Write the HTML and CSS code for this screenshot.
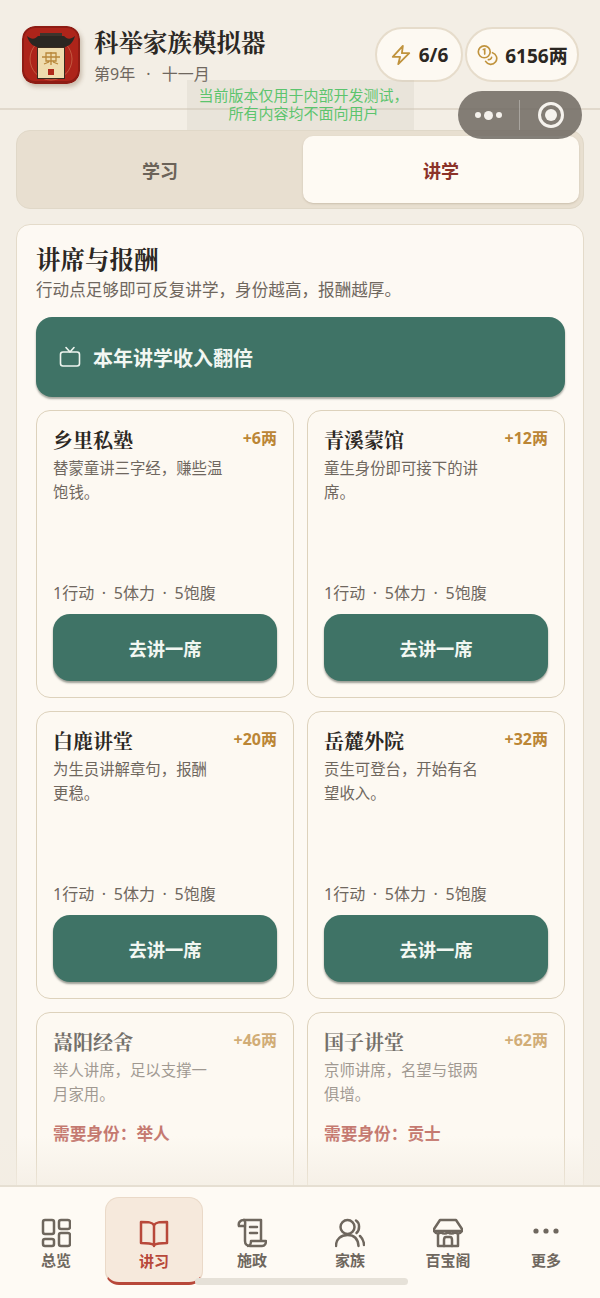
FILE: index.html
```html
<!DOCTYPE html>
<html lang="zh-CN">
<head>
    <meta charset="UTF-8">
    <meta name="viewport" content="width=device-width, initial-scale=1.0">
    <title>科举家族模拟器</title>
    <link rel="stylesheet" href="styles.css">
</head>
<body>
    <div class="app">
        <header class="top-bar">
            <div class="logo">
                <svg viewBox="0 0 58 58" width="58" height="58">
                    <rect x="0" y="0" width="58" height="58" rx="13" fill="#8e1c14"/>
                    <rect x="2" y="2" width="54" height="53" rx="11" fill="#ad241a"/>
                    <circle cx="29" cy="33" r="21" fill="none" stroke="#c9674a" stroke-width="0.8"/>
                    <rect x="15" y="20" width="28" height="33" fill="#3a2a20"/>
                    <rect x="16" y="22" width="26" height="30" fill="#efdcae"/>
                    <path d="M5 10 C10 14 13 13 16 10 H42 C45 13 48 14 53 10 C51 17 47 20 43 21 H15 C11 20 7 17 5 10Z" fill="#2b2722"/>
                    <rect x="18" y="7" width="22" height="3" fill="#3d342c"/>
                    <path d="M20 31 H38 M29 26 V39 M24 27 H34 V35 H24 Z M22 38 L27 36 M36 38 L31 36" stroke="#b8873a" stroke-width="1.3" fill="none"/>
                    <rect x="26" y="43" width="6" height="6" fill="#b02a1c"/>
                </svg>
            </div>
            <div class="title-block">
                <h1 class="game-title">科举家族模拟器</h1>
                <p class="game-date">第9年 <span class="dot">·</span> 十一月</p>
            </div>
            <div class="stat-pills">
                <div class="pill pill-action">
                    <svg viewBox="0 0 24 24" width="22" height="22" fill="none" stroke="#c0933d" stroke-width="2" stroke-linejoin="round">
                        <path d="M14 2 L3 14 H11 L9 22 L21 10 H13 Z"/>
                    </svg>
                    <span>6/6</span>
                </div>
                <div class="pill pill-money">
                    <svg viewBox="0 0 24 24" width="22" height="22" fill="none" stroke="#c0933d" stroke-width="1.8" stroke-linecap="round">
                        <circle cx="9" cy="8.5" r="6.5"/>
                        <path d="M8 6 L9.5 5.5 V11"/>
                        <path d="M18 9.5 A6.5 6.5 0 1 1 10.5 19"/>
                        <path d="M13.5 17 A3 3 0 0 0 17 14.5"/>
                    </svg>
                    <span>6156两</span>
                </div>
            </div>
        </header>

        <div class="dev-notice">当前版本仅用于内部开发测试，<br>所有内容均不面向用户</div>

        <div class="mp-capsule">
            <div class="capsule-dots"><i></i><b></b><i></i></div>
            <div class="capsule-line"></div>
            <div class="capsule-target"></div>
        </div>

        <main class="content">
            <div class="tabs">
                <div class="tab">学习</div>
                <div class="tab tab-active">讲学</div>
            </div>

            <section class="panel">
                <h2 class="panel-title">讲席与报酬</h2>
                <p class="panel-desc">行动点足够即可反复讲学，身份越高，报酬越厚。</p>

                <div class="ad-banner">
                    <svg viewBox="0 0 24 24" width="24" height="24" fill="none" stroke="#eef5ef" stroke-width="1.6" stroke-linecap="round" stroke-linejoin="round">
                        <rect x="2.5" y="7" width="19" height="14" rx="2.5"/>
                        <path d="M8 2.5 L12 7 L16 2.5"/>
                    </svg>
                    <span>本年讲学收入翻倍</span>
                </div>

                <div class="venue-grid">
                    <article class="venue">
                        <div class="venue-head"><h3>乡里私塾</h3><span class="reward">+6两</span></div>
                        <p class="venue-desc">替蒙童讲三字经，赚些温<br>饱钱。</p>
                        <p class="venue-cost">1行动 <span class="dot">·</span> 5体力 <span class="dot">·</span> 5饱腹</p>
                        <button class="venue-btn">去讲一席</button>
                    </article>
                    <article class="venue">
                        <div class="venue-head"><h3>青溪蒙馆</h3><span class="reward">+12两</span></div>
                        <p class="venue-desc">童生身份即可接下的讲<br>席。</p>
                        <p class="venue-cost">1行动 <span class="dot">·</span> 5体力 <span class="dot">·</span> 5饱腹</p>
                        <button class="venue-btn">去讲一席</button>
                    </article>
                    <article class="venue">
                        <div class="venue-head"><h3>白鹿讲堂</h3><span class="reward">+20两</span></div>
                        <p class="venue-desc">为生员讲解章句，报酬<br>更稳。</p>
                        <p class="venue-cost">1行动 <span class="dot">·</span> 5体力 <span class="dot">·</span> 5饱腹</p>
                        <button class="venue-btn">去讲一席</button>
                    </article>
                    <article class="venue">
                        <div class="venue-head"><h3>岳麓外院</h3><span class="reward">+32两</span></div>
                        <p class="venue-desc">贡生可登台，开始有名<br>望收入。</p>
                        <p class="venue-cost">1行动 <span class="dot">·</span> 5体力 <span class="dot">·</span> 5饱腹</p>
                        <button class="venue-btn">去讲一席</button>
                    </article>
                    <article class="venue venue-locked">
                        <div class="venue-head"><h3>嵩阳经舍</h3><span class="reward">+46两</span></div>
                        <p class="venue-desc">举人讲席，足以支撑一<br>月家用。</p>
                        <p class="venue-need">需要身份：举人</p>
                    </article>
                    <article class="venue venue-locked">
                        <div class="venue-head"><h3>国子讲堂</h3><span class="reward">+62两</span></div>
                        <p class="venue-desc">京师讲席，名望与银两<br>俱增。</p>
                        <p class="venue-need">需要身份：贡士</p>
                    </article>
                </div>
            </section>
        </main>

        <div class="nav-fade"></div>

        <nav class="bottom-nav">
            <div class="nav-item">
                <svg viewBox="0 0 30 30" width="30" height="30" fill="none" stroke="#6f675e" stroke-width="2.5" stroke-linejoin="round">
                    <rect x="2" y="2" width="11" height="14" rx="2"/>
                    <rect x="18" y="2" width="11" height="9" rx="2"/>
                    <rect x="2" y="21" width="11" height="7" rx="2"/>
                    <rect x="18" y="15" width="11" height="13" rx="2"/>
                </svg>
                <span>总览</span>
            </div>
            <div class="nav-item nav-active">
                <svg viewBox="0 0 30 30" width="30" height="30" fill="none" stroke="#b8483a" stroke-width="2.5" stroke-linejoin="round" stroke-linecap="round">
                    <path d="M15 6 C13 3 9 3 2 3 V24 C8 24 12 24 15 26 C18 24 22 24 28 24 V3 C21 3 17 3 15 6 Z"/>
                    <path d="M15 6 V27"/>
                </svg>
                <span>讲习</span>
            </div>
            <div class="nav-item">
                <svg viewBox="0 0 30 30" width="30" height="30" fill="none" stroke="#6f675e" stroke-width="2.5" stroke-linejoin="round" stroke-linecap="round">
                    <path d="M7 2 H24 V22"/>
                    <path d="M7 2 C3 2 1 5 2 8 H8 V23 C8 26 10 28 13 28 H25 C28 28 29 25 29 23 H14 C14 25 13 28 11 28"/>
                    <path d="M7 2 C9 3 8 6 8 8"/>
                    <path d="M13 9 H20 M13 15 H20"/>
                </svg>
                <span>施政</span>
            </div>
            <div class="nav-item">
                <svg viewBox="0 0 30 30" width="30" height="30" fill="none" stroke="#6f675e" stroke-width="2.5" stroke-linecap="round">
                    <circle cx="12.5" cy="9" r="7"/>
                    <path d="M1 28 C1 21 6 17 12.5 17 C19 17 23 21 23.5 28"/>
                    <path d="M21 2.5 C25 5 25 12 21.5 15"/>
                    <path d="M25 18 C28 21 29 24 29 27"/>
                </svg>
                <span>家族</span>
            </div>
            <div class="nav-item">
                <svg viewBox="0 0 30 30" width="30" height="30" fill="none" stroke="#6f675e" stroke-width="2.5" stroke-linejoin="round" stroke-linecap="round">
                    <path d="M7 2 H23 L29 11 V13 H1 V11 Z"/>
                    <path d="M1 13 C3 16 6 16 8 14 C10 16 13 16 15 14 C17 16 20 16 22 14 C24 16 27 16 29 13"/>
                    <path d="M5 16 V28 H25 V16"/>
                    <path d="M11 28 V22 C11 20 12 19 13 19 H17 C18 19 19 20 19 22 V28"/>
                </svg>
                <span>百宝阁</span>
            </div>
            <div class="nav-item">
                <svg viewBox="0 0 30 30" width="30" height="30" fill="#6f675e">
                    <circle cx="5" cy="13" r="2.6"/>
                    <circle cx="15" cy="13" r="2.6"/>
                    <circle cx="25" cy="13" r="2.6"/>
                </svg>
                <span>更多</span>
            </div>
        </nav>
        <div class="home-bar"></div>
    </div>
</body>
</html>
```

FILE: styles.css
```css
* {
    box-sizing: border-box;
}

body {
    margin: 0;
    background-color: #f3eee5;
    color: #2c2722;
    font-family: "Noto Sans", "Noto Sans CJK SC", sans-serif;
}

h1, h2, h3, p {
    margin: 0;
}

.app {
    position: relative;
    width: 600px;
    height: 1298px;
    overflow: hidden;
}

/* Top bar */
.top-bar {
    display: flex;
    align-items: flex-start;
    height: 110px;
    padding: 26px 21px 0 22px;
    border-bottom: 2px solid #e1d9cc;
}

.logo {
    width: 58px;
    height: 58px;
    border-radius: 13px;
    overflow: hidden;
    box-shadow: 2px 3px 4px rgba(110, 80, 50, 0.3);
}

.title-block {
    margin-top: -1px;
    margin-left: 14px;
}

.game-title {
    font-family: "Noto Serif CJK SC", "Noto Sans CJK SC", serif;
    font-size: 24.5px;
    font-weight: 700;
    line-height: 34px;
    color: #2b2723;
}

.game-date {
    margin-top: 3px;
    font-size: 16px;
    line-height: 24px;
    color: #6f675e;
}

.game-date .dot {
    margin: 0 7px;
}

.stat-pills {
    display: flex;
    gap: 2px;
    margin-left: auto;
    margin-top: 1px;
}

.pill {
    display: flex;
    align-items: center;
    justify-content: center;
    gap: 7px;
    height: 55px;
    border: 2px solid #e6dccb;
    border-radius: 28px;
    background-color: #fdf9f2;
    font-size: 19px;
    font-weight: 700;
}

.pill-action {
    width: 88px;
}

.pill-money {
    width: 114px;
}

/* Overlays from the host app */
.dev-notice {
    position: absolute;
    left: 187px;
    top: 80px;
    width: 227px;
    height: 50px;
    padding: 6px 0 0 6px;
    background-color: rgba(200, 195, 180, 0.22);
    color: #5cc46e;
    font-size: 15px;
    line-height: 18px;
    text-align: center;
}

.mp-capsule {
    position: absolute;
    left: 458px;
    top: 91px;
    z-index: 3;
    display: flex;
    align-items: center;
    width: 124px;
    height: 48px;
    border-radius: 24px;
    background-color: rgba(110, 105, 98, 0.85);
}

.capsule-dots {
    display: flex;
    align-items: center;
    justify-content: center;
    gap: 3px;
    width: 61px;
}

.capsule-dots i {
    width: 6px;
    height: 6px;
    border-radius: 50%;
    background-color: #f4f1ec;
}

.capsule-dots b {
    width: 9px;
    height: 9px;
    border-radius: 50%;
    background-color: #f4f1ec;
}

.capsule-line {
    width: 1px;
    height: 30px;
    background-color: rgba(255, 255, 255, 0.3);
}

.capsule-target {
    position: relative;
    width: 26px;
    height: 26px;
    margin-left: 18px;
    border: 3px solid #f6f3ee;
    border-radius: 50%;
}

.capsule-target::after {
    content: "";
    position: absolute;
    left: 4px;
    top: 4px;
    width: 12px;
    height: 12px;
    border-radius: 50%;
    background-color: #f6f3ee;
}

/* Tabs */
.content {
    padding: 20px 16px 0;
}

.tabs {
    display: flex;
    height: 79px;
    padding: 5px 4px 5px 5px;
    gap: 5px;
    border: 1px solid #e0d8c8;
    border-radius: 14px;
    background-color: #e8dfd0;
}

.tab {
    flex: 1;
    display: flex;
    align-items: center;
    justify-content: center;
    font-size: 18px;
    font-weight: 700;
    color: #6b6359;
}

.tab-active {
    border-radius: 10px;
    background-color: #fefaf3;
    color: #8c3228;
    box-shadow: 0 1px 2px rgba(120, 100, 70, 0.25);
}

/* Panel */
.panel {
    margin-top: 15px;
    padding: 17px 18px 40px 19px;
    border: 1px solid #e4dbca;
    border-radius: 14px;
    background-color: #fdf9f3;
}

.panel-title {
    margin-bottom: 2px;
    font-family: "Noto Serif CJK SC", "Noto Sans CJK SC", serif;
    font-size: 24.5px;
    font-weight: 700;
    line-height: 34px;
    color: #2b2723;
}

.panel-desc {
    font-size: 16.6px;
    line-height: 24px;
    color: #6f675e;
}

.ad-banner {
    display: flex;
    align-items: center;
    gap: 11px;
    height: 80px;
    margin-top: 15px;
    padding-left: 22px;
    border-radius: 16px;
    background-color: #3f7366;
    box-shadow: 0 2px 2px rgba(60, 70, 60, 0.45);
    color: #f2f7f2;
    font-size: 20px;
    font-weight: 700;
}

.venue-grid {
    display: grid;
    grid-template-columns: 258px 258px;
    grid-auto-rows: 288px;
    gap: 13px;
    margin-top: 13px;
}

.venue {
    display: flex;
    flex-direction: column;
    padding: 14px 16px 16px;
    border: 1px solid #ddd2bc;
    border-radius: 14px;
    background-color: #fdf9f2;
}

.venue-head {
    display: flex;
    align-items: flex-start;
    justify-content: space-between;
}

.venue-head h3 {
    font-family: "Noto Serif CJK SC", "Noto Sans CJK SC", serif;
    font-size: 20px;
    font-weight: 700;
    line-height: 30px;
    color: #2b2723;
}

.reward {
    font-size: 16px;
    font-weight: 700;
    line-height: 26px;
    color: #bb8636;
}

.venue-desc {
    margin-top: 2px;
    font-size: 15.4px;
    line-height: 24px;
    color: #6f675e;
}

.venue-cost {
    margin-top: auto;
    font-size: 16px;
    line-height: 22px;
    color: #6f675e;
}

.venue-cost .dot {
    margin: 0 3.5px;
}

.venue-btn {
    height: 67px;
    margin-top: 10px;
    border: none;
    border-radius: 17px;
    background-color: #3f7366;
    box-shadow: 0 2px 2px rgba(60, 70, 60, 0.5);
    color: #f2f7f2;
    font-family: inherit;
    font-size: 18.3px;
    font-weight: 700;
}

.venue-locked .venue-head h3,
.venue-locked .venue-desc,
.venue-locked .reward,
.venue-locked .venue-need {
    opacity: 0.65;
}

.venue-need {
    margin-top: 15px;
    font-size: 16.7px;
    font-weight: 700;
    line-height: 24px;
    color: #a8362c;
}

/* Bottom navigation */
.nav-fade {
    position: absolute;
    left: 0;
    right: 0;
    bottom: 112px;
    height: 50px;
    background: linear-gradient(rgba(243, 237, 227, 0), rgba(243, 237, 227, 0.75));
}

.bottom-nav {
    position: absolute;
    left: 0;
    right: 0;
    bottom: 0;
    display: grid;
    grid-template-columns: repeat(6, 98px);
    height: 113px;
    padding: 10px 7px 0;
    border-top: 2px solid #e6dfd2;
    background-color: #fefaf4;
}

.nav-item {
    display: flex;
    flex-direction: column;
    align-items: center;
    height: 88px;
    padding-top: 21px;
    color: #6f675e;
    font-size: 15px;
    font-weight: 700;
    line-height: 22px;
}

.nav-item span {
    margin-top: 1px;
}

.nav-active {
    border: 1px solid #ead9c8;
    border-bottom: 3px solid #b8483a;
    border-radius: 14px;
    background-color: #f6e9dc;
    color: #b8483a;
}

.home-bar {
    position: absolute;
    left: 195px;
    top: 1278px;
    width: 213px;
    height: 7px;
    border-radius: 4px;
    background-color: #e6e1d8;
}
```
